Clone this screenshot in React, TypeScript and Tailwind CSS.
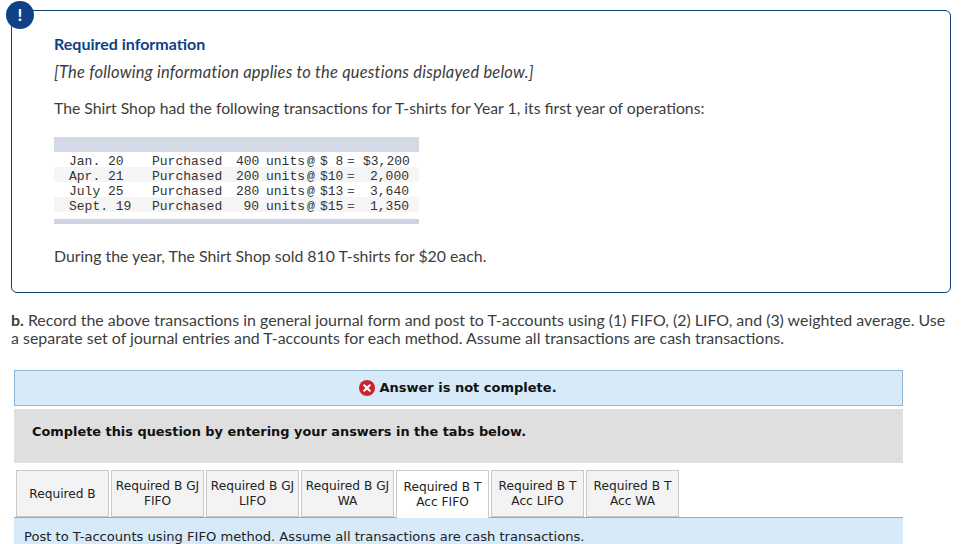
const rows = [
  { date: "Jan. 20", qty: "400", price: "$ 8", amount: "$3,200", shaded: false },
  { date: "Apr. 21", qty: "200", price: "$10", amount: "2,000", shaded: true },
  { date: "July 25", qty: "280", price: "$13", amount: "3,640", shaded: false },
  { date: "Sept. 19", qty: "90", price: "$15", amount: "1,350", shaded: true },
];

const tabs = [
  ["Required B"],
  ["Required B GJ", "FIFO"],
  ["Required B GJ", "LIFO"],
  ["Required B GJ", "WA"],
  ["Required B T", "Acc FIFO"],
  ["Required B T", "Acc LIFO"],
  ["Required B T", "Acc WA"],
];

export default function App() {
  return (
    <div className="h-[544px] w-[973px] overflow-hidden bg-white font-['Lato',sans-serif] text-[#3d3d3d]">
      <div className="relative ml-[11px] mt-[10px] h-[283px] w-[940px] rounded-[6px] border border-[#123f6d] pl-[42px] pt-[23px]">
        <div className="absolute left-[-6px] top-[-10px] flex h-[28px] w-[28px] items-center justify-center rounded-full bg-[#0f4187] text-[17px] font-bold text-white">
          !
        </div>
        <h2 className="text-[16px] font-bold leading-[20px] text-[#0f4187]">Required information</h2>
        <p className="mt-[8px] text-[16.5px] italic leading-[20px] tracking-[0.2px]">
          [The following information applies to the questions displayed below.]
        </p>
        <p className="mt-[16px] text-[15.75px] leading-[20px]">
          The Shirt Shop had the following transactions for T-shirts for Year 1, its first year of operations:
        </p>
        <div className="mt-[19px] w-[365px] font-['Liberation_Mono',monospace] text-[13px] leading-[15px] text-[#333]">
          <div className="h-[15px] bg-[#d3d9e7]" />
          <div>
            {rows.map((row) => (
              <div
                key={row.date}
                className={`grid h-[15px] grid-cols-[15px_83px_84px_23px_7px_41px_13px_27px_16px_56px] whitespace-pre pt-[2px] ${row.shaded ? "bg-[#f5f5f5]" : ""}`}
              >
                <span />
                <span>{row.date}</span>
                <span>Purchased</span>
                <span className="text-right">{row.qty}</span>
                <span />
                <span>units</span>
                <span>@</span>
                <span>{row.price}</span>
                <span className="text-[#555]">=</span>
                <span className="pr-[10px] text-right">{row.amount}</span>
              </div>
            ))}
          </div>
          <div className="mt-[7px] h-[5px] bg-[#ced4e3]" />
        </div>
        <p className="mt-[22px] text-[15.85px] leading-[20px]">
          During the year, The Shirt Shop sold 810 T-shirts for $20 each.
        </p>
      </div>

      <p className="ml-[11px] mt-[18px] w-[940px] text-[15.93px] leading-[18px]">
        <strong>b.</strong> Record the above transactions in general journal form and post to T-accounts using (1) FIFO, (2) LIFO, and (3) weighted average. Use a separate set of journal entries and T-accounts for each method. Assume all transactions are cash transactions.
      </p>

      <div className="ml-[14px] mt-[23px] w-[889px] font-['DejaVu_Sans',sans-serif]">
        <div className="flex h-[36px] items-center justify-center gap-[4px] border border-[#8fb7da] bg-[#d6eafa] pr-[1px] text-[13px] font-bold text-[#111]">
          <svg className="h-[16px] w-[16px]" viewBox="0 0 16 16" aria-hidden="true">
            <circle cx="8" cy="8" r="8" fill="#c9252c" />
            <path d="M5.2 5.2l5.6 5.6M10.8 5.2l-5.6 5.6" stroke="#fff" strokeWidth="2" strokeLinecap="round" />
          </svg>
          Answer is not complete.
        </div>
        <div className="mt-[3px] flex h-[54px] items-start bg-[#dfdfdf] pl-[18px] pt-[14px] text-[12.9px] font-bold leading-[17px] text-[#111]">
          Complete this question by entering your answers in the tabs below.
        </div>
        <div className="mt-[7px] flex h-[48px] gap-[2px] border-b border-[#a5a5a5] pl-[2px]">
          {tabs.map((tab, i) => (
            <div
              key={tab.join(" ")}
              className={`flex h-[47px] w-[93px] flex-col items-center justify-center border border-[#c9c9c9] pt-px text-center text-[12.2px] leading-[15px] text-[#222] ${i === 4 ? "relative z-10 h-[48px] border-b-0 border-[#a5a5a5] bg-white" : "bg-[#f3f3f3]"}`}
            >
              {tab.map((line) => (
                <span key={line} className="whitespace-nowrap">{line}</span>
              ))}
            </div>
          ))}
        </div>
        <div className="h-[40px] bg-[#d6eafa] pl-[10px] pt-[11px] text-[13.1px] leading-[16px] text-[#222]">
          Post to T-accounts using FIFO method. Assume all transactions are cash transactions.
        </div>
      </div>
    </div>
  );
}
